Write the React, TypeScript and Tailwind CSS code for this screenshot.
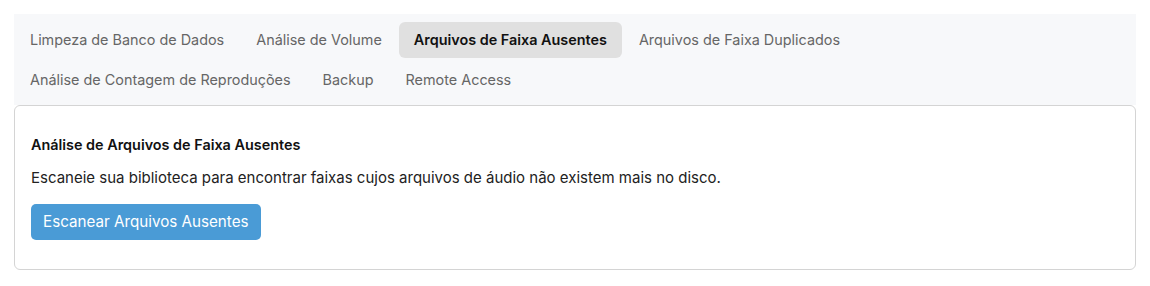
import React from "react";

const tabs1 = [
  "Limpeza de Banco de Dados",
  "Análise de Volume",
  "Arquivos de Faixa Ausentes",
  "Arquivos de Faixa Duplicados",
];
const tabs2 = ["Análise de Contagem de Reproduções", "Backup", "Remote Access"];

function Tab({ label }: { label: string }) {
  const active = label === "Arquivos de Faixa Ausentes";
  return (
    <button
      className={
        active
          ? "h-9 px-[15px] rounded-md bg-[#e0e0e0] text-[14.4px] font-semibold text-[#111]"
          : "h-9 px-[15px] rounded-md text-[14.4px] text-[#666]"
      }
    >
      {label}
    </button>
  );
}

export default function App() {
  return (
    <div
      className="bg-white p-[14px] w-[1150px] h-[286px]"
      style={{ fontFamily: "Inter, 'Noto Sans', sans-serif" }}
    >
      <div className="bg-[#f7f8fa] pt-2 pb-[7px] pl-[1px] flex flex-col gap-1">
        <div className="flex gap-[2px]">
          {tabs1.map((t) => (
            <Tab key={t} label={t} />
          ))}
        </div>
        <div className="flex gap-[2px]">
          {tabs2.map((t) => (
            <Tab key={t} label={t} />
          ))}
        </div>
      </div>
      <div className="border border-[#d4d4d4] rounded-md bg-white px-4 pt-[28px] pb-[29px]">
        <h3 className="text-[14.4px] font-semibold text-[#111] leading-[22px]">
          Análise de Arquivos de Faixa Ausentes
        </h3>
        <p className="mt-[11px] text-[15px] text-[#222] leading-[22px]">
          Escaneie sua biblioteca para encontrar faixas cujos arquivos de áudio não existem mais no disco.
        </p>
        <button className="mt-[15px] h-9 px-3 rounded-[5px] bg-[#4a9bd6] text-white text-[15.2px]">
          Escanear Arquivos Ausentes
        </button>
      </div>
    </div>
  );
}
